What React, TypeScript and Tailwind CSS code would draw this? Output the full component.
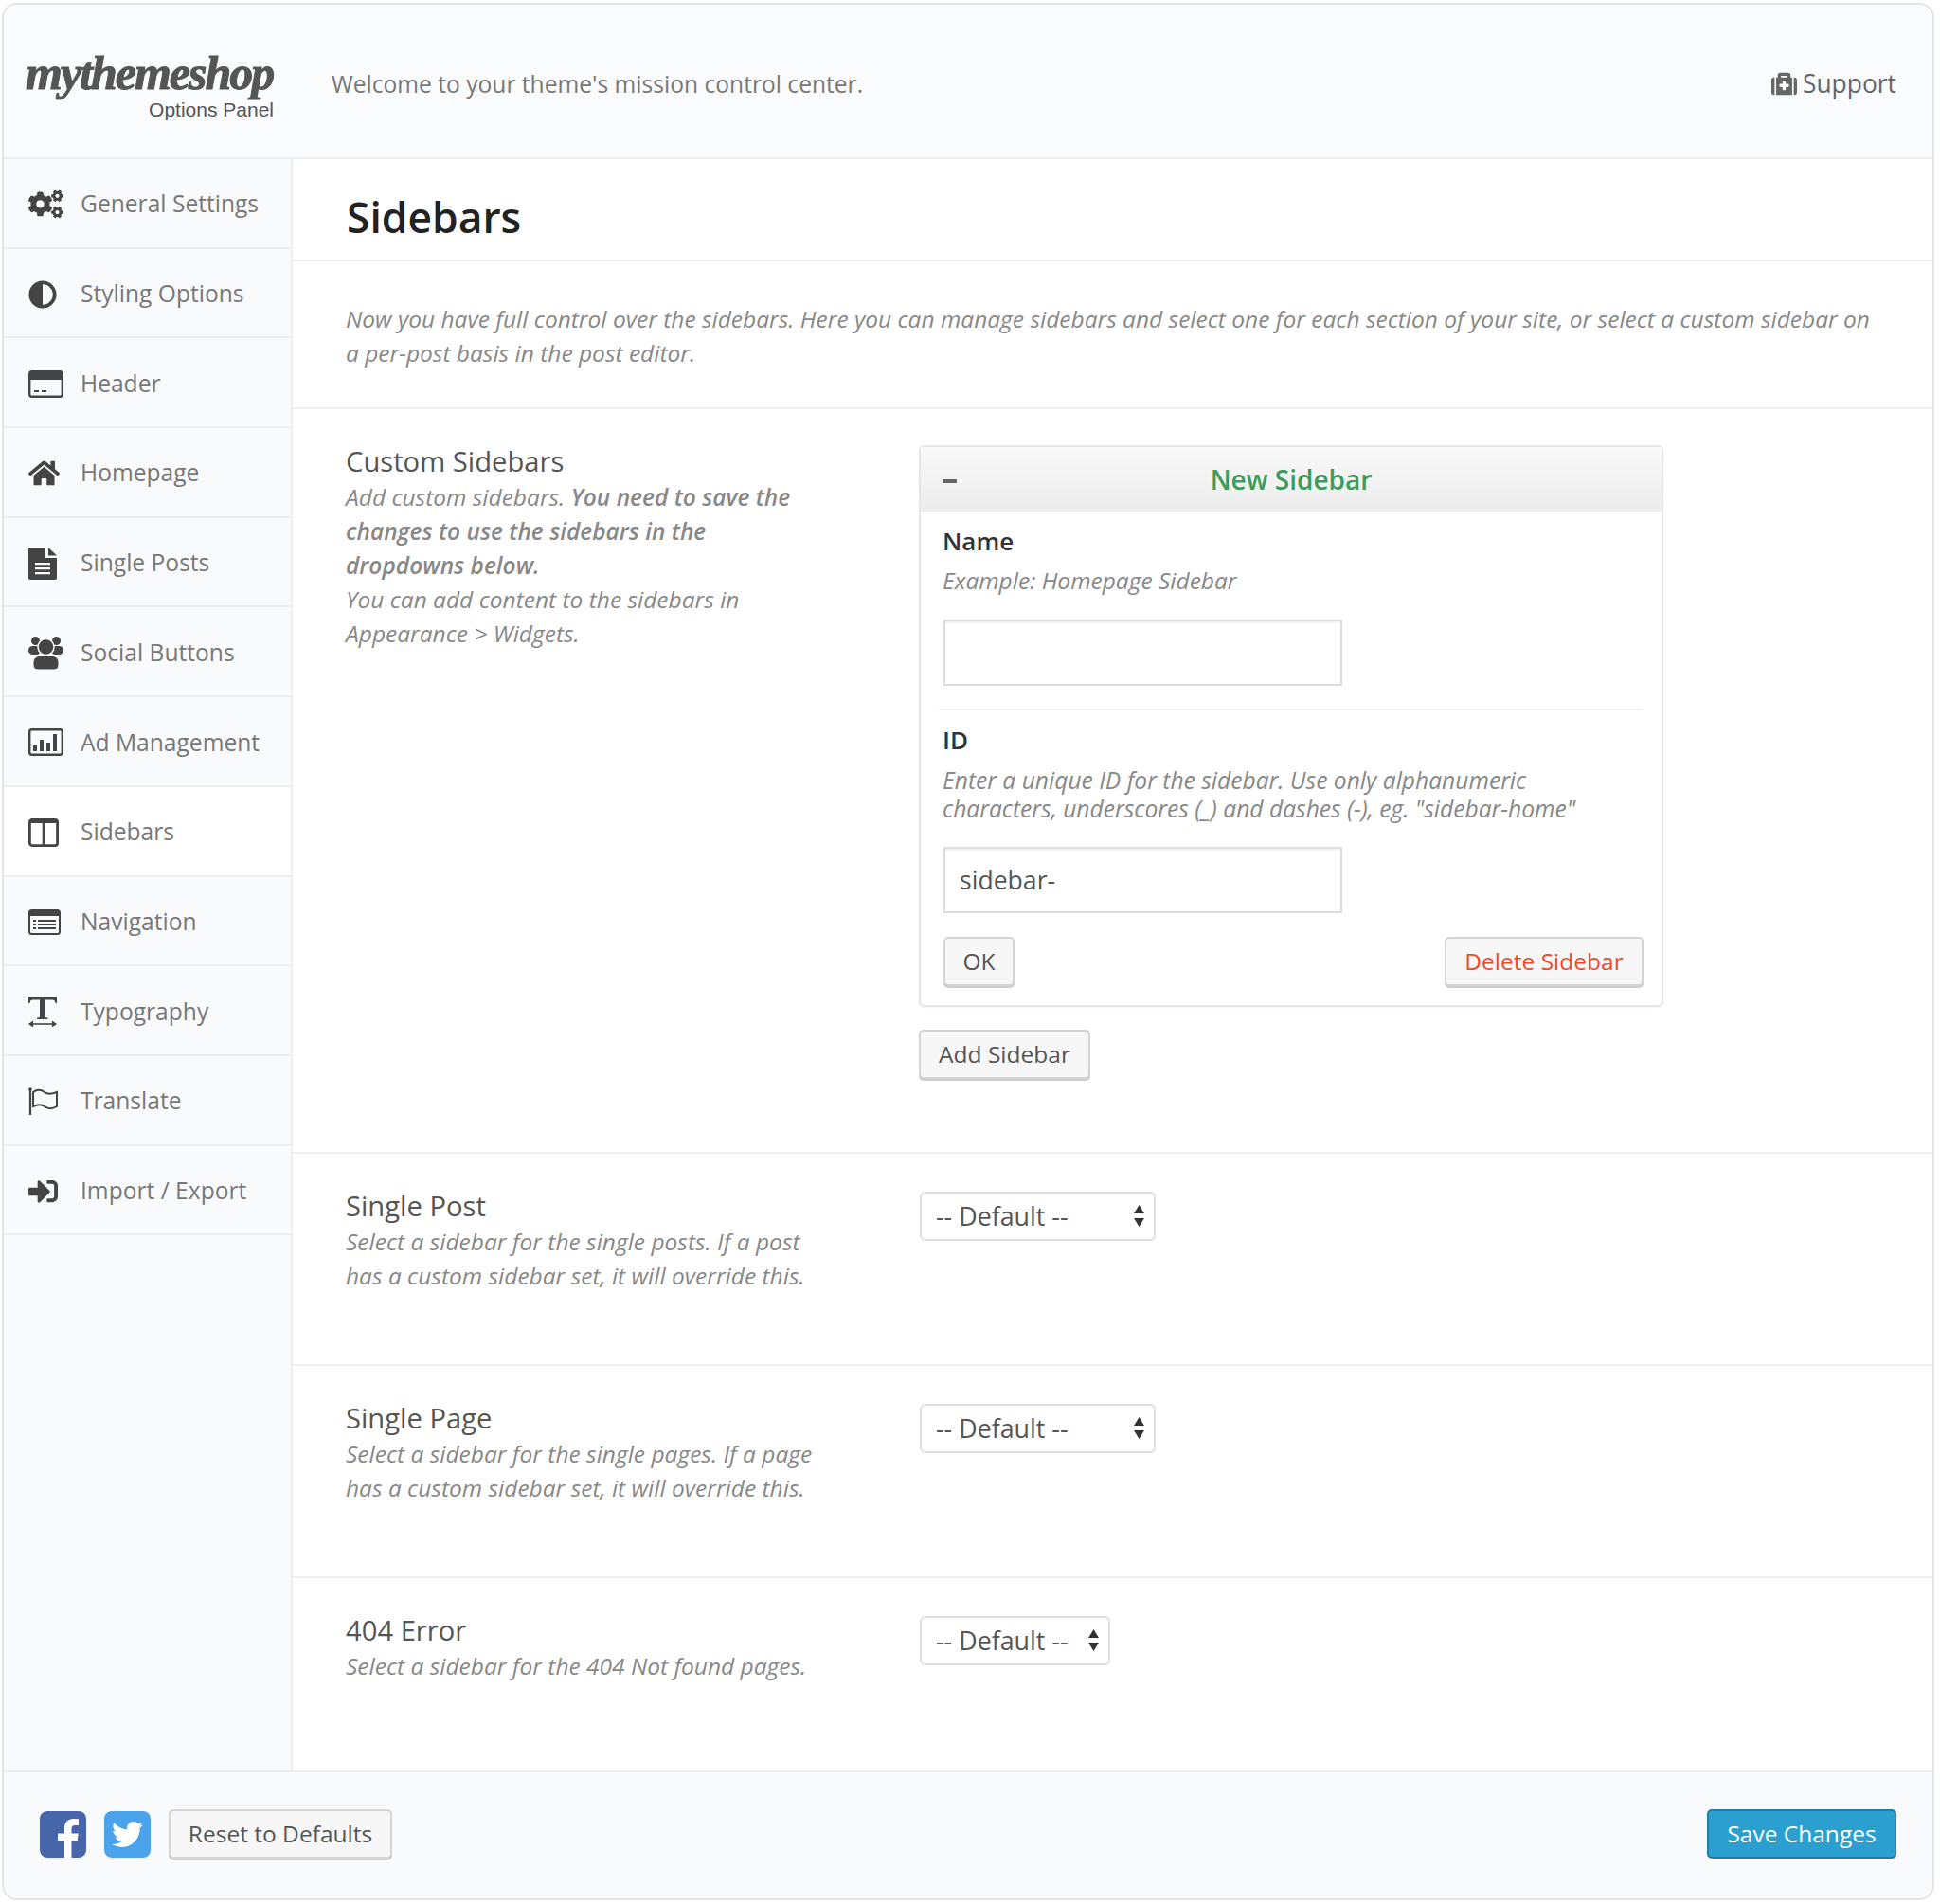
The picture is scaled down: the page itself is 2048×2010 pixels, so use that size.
import type { ReactNode } from "react";
import { FaAdjust, FaCogs, FaHome, FaMedkit, FaSignInAlt, FaTwitter } from "react-icons/fa";

function HeaderIcon() {
  return (
    <svg width="37" height="29" viewBox="0 0 37 29" fill="none">
      <rect x="1.2" y="1.2" width="34.6" height="26.6" rx="2.5" stroke="#444" strokeWidth="2.4" />
      <rect x="1" y="1" width="35" height="9" fill="#444" />
      <rect x="6" y="21" width="5" height="2" fill="#444" />
      <rect x="14" y="21" width="5" height="2" fill="#444" />
    </svg>
  );
}

function FileIcon() {
  return (
    <svg width="30" height="34" viewBox="0 0 30 34">
      <path d="M1 0H18V11H30V32a2 2 0 0 1-2 2H2a2 2 0 0 1-2-2V1z" fill="#444" />
      <path d="M21 0 30 8.500H21z" fill="#444" />
      <path d="M7 16h16v2.200H7zM7 21h16v2.200H7zM7 26h16v2.200H7z" fill="#f9fafc" />
    </svg>
  );
}

function UsersIcon() {
  return (
    <svg width="37" height="35" viewBox="0 0 37 35">
      <circle cx="7.500" cy="4.500" r="4.500" fill="#444" />
      <circle cx="29.500" cy="4.500" r="4.500" fill="#444" />
      <rect x="0" y="10" width="13" height="9" rx="4.500" fill="#444" />
      <rect x="24" y="10" width="13" height="9" rx="4.500" fill="#444" />
      <circle cx="18.500" cy="11" r="8.500" fill="#444" stroke="#f9fafc" strokeWidth="1.500" />
      <path d="M5 28c0-5 3-7.500 7-7.500h13c4 0 7 2.500 7 7.500v2c0 3-2 5-5 5H10c-3 0-5-2-5-5z" fill="#444" stroke="#f9fafc" strokeWidth="1" />
    </svg>
  );
}

function AdIcon() {
  return (
    <svg width="37" height="29" viewBox="0 0 37 29" fill="none">
      <rect x="1.2" y="1.2" width="34.6" height="26.6" rx="2.5" stroke="#444" strokeWidth="2.4" />
      <rect x="5" y="18" width="4" height="6" fill="#444" />
      <rect x="12" y="12" width="4" height="12" fill="#444" />
      <rect x="19" y="15" width="4" height="9" fill="#444" />
      <rect x="26" y="6" width="4" height="18" fill="#444" />
    </svg>
  );
}

function ColumnsIcon() {
  return (
    <svg width="32" height="30" viewBox="0 0 32 30" fill="none">
      <rect x="1.4" y="1.4" width="29.2" height="27.2" rx="2.5" stroke="#444" strokeWidth="2.8" />
      <rect x="1" y="1" width="30" height="4" fill="#444" />
      <rect x="14.7" y="2" width="2.6" height="26" fill="#444" />
    </svg>
  );
}

function NavIcon() {
  return (
    <svg width="34" height="27" viewBox="0 0 34 27" fill="none">
      <rect x="1" y="1" width="32" height="25" rx="2.5" stroke="#444" strokeWidth="2" />
      <rect x="1" y="1" width="32" height="6" fill="#444" />
      <path d="M5 11h3v2H5zM10 11h19v2H10zM5 15h3v2H5zM10 15h19v2H10zM5 19h3v2H5zM10 19h19v2H10z" fill="#444" />
    </svg>
  );
}

function TypeIcon() {
  return (
    <svg width="30" height="32" viewBox="0 0 30 32" fill="none">
      <path d="M0 0h30v7h-1.500c-.3-2.500-1-3.500-3.500-3.500h-7.500v17c0 1.500.5 2 3 2V24H9v-1.500c2.500 0 3-.5 3-2v-17H5c-2.500 0-3.200 1-3.500 3.500H0z" fill="#444" />
      <path d="M1 29h28" stroke="#444" strokeWidth="1.600" />
      <path d="M5 25.500 0 29l5 3.500zM25 25.500 30 29l-5 3.500z" fill="#444" />
    </svg>
  );
}

function FlagIcon() {
  return (
    <svg width="32" height="29" viewBox="0 0 32 29" fill="none">
      <circle cx="2" cy="2" r="1.800" fill="#444" />
      <path d="M2 2v27" stroke="#444" strokeWidth="2.200" />
      <path d="M5 5c4-3 8-3 12 0s8 2 13 0v15c-5 3-9 3-13 0s-8-2-12 0z" stroke="#444" strokeWidth="2" />
    </svg>
  );
}

function FacebookIcon() {
  return (
    <svg width="49" height="49" viewBox="0 0 49 49">
      <rect width="49" height="49" rx="8" fill="#4766a9" />
      <path d="M26 49V31h-7v-7.500h7V18c0-6.500 4-10 9.500-10 2.500 0 4.500.2 5.500.3v6.700h-3.700c-3 0-3.800 1.500-3.800 3.700v4.800h7.200l-1 7.500h-6.200v18z" fill="#fff" />
    </svg>
  );
}

function SelectArrows() {
  return (
    <svg className="pointer-events-none absolute right-[12px] top-[14px]" width="11" height="23" viewBox="0 0 11 23">
      <path d="M5.500 0 11 9H0zM5.500 23 0 14h11z" fill="#333" />
    </svg>
  );
}

type NavItem = { label: string; icon: ReactNode; active?: boolean };

const NAV_ITEMS: NavItem[] = [
  { label: "General Settings", icon: <FaCogs size={37} color="#444" /> },
  { label: "Styling Options", icon: <FaAdjust size={30} color="#444" /> },
  { label: "Header", icon: <HeaderIcon /> },
  { label: "Homepage", icon: <FaHome size={33} color="#444" /> },
  { label: "Single Posts", icon: <FileIcon /> },
  { label: "Social Buttons", icon: <UsersIcon /> },
  { label: "Ad Management", icon: <AdIcon /> },
  { label: "Sidebars", icon: <ColumnsIcon />, active: true },
  { label: "Navigation", icon: <NavIcon /> },
  { label: "Typography", icon: <TypeIcon /> },
  { label: "Translate", icon: <FlagIcon /> },
  { label: "Import / Export", icon: <FaSignInAlt size={31} color="#444" /> },
];

const BUTTON =
  "flex h-[52px] items-center justify-center rounded-[5px] border-2 border-[#d4d4d4] bg-[#f7f7f7] text-[24.5px] text-[#555] shadow-[0_2px_0_#ccc]";

function SectionText({ title, children }: { title: string; children: ReactNode }) {
  return (
    <div className="-mt-[4px] w-[510px]">
      <h3 className="text-[29.2px] leading-[39px] text-[#555]">{title}</h3>
      <div className="text-[24.5px] italic leading-[36px] text-[#888]">{children}</div>
    </div>
  );
}

function SelectBox({ width }: { width: string }) {
  return (
    <div className={`relative h-[52px] ${width}`}>
      <select
        defaultValue="default"
        className="h-full w-full appearance-none rounded-[6px] border-2 border-[#dedede] bg-white pl-[15px] text-[26.8px] text-[#555]"
      >
        <option value="default">-- Default --</option>
      </select>
      <SelectArrows />
    </div>
  );
}

function SelectSection({ title, text, width }: { title: string; text: ReactNode; width: string }) {
  return (
    <section className="flex h-[224px] border-b-2 border-[#efefef] pl-[56px] pt-[40px]">
      <div className="w-[606px]">
        <SectionText title={title}>{text}</SectionText>
      </div>
      <SelectBox width={width} />
    </section>
  );
}

export default function App() {
  return (
    <div className="h-[2010px] w-[2048px] bg-white pl-[2px] pt-[3px] font-['Open_Sans',sans-serif]">
      <div className="flex h-[2003px] w-[2040px] flex-col overflow-hidden rounded-[16px] border-2 border-[#e4e4e4] bg-white">
        <header className="flex h-[163px] shrink-0 items-center border-b-2 border-[#eeeeee] bg-[#f9fbfd] pl-[23px] pr-[38px]">
          <div className="flex w-[323px] flex-col pt-[4px]">
            <div className="h-[56px] w-[264px] font-['Liberation_Serif',serif] text-[50px] font-bold italic leading-[56px] tracking-[-2px] text-[#555] [-webkit-text-stroke:1px_#555]">
              mythemeshop
            </div>
            <div className="w-[262px] text-right font-['Liberation_Sans',sans-serif] text-[21px] leading-[22px] text-[#555]">
              Options Panel
            </div>
          </div>
          <p className="flex-1 pt-[8px] text-[24.6px] text-[#777]">Welcome to your theme's mission control center.</p>
          <div className="flex items-center gap-[6px] pt-[6px] text-[26.4px] text-[#666]">
            <FaMedkit size={27} color="#666" />
            Support
          </div>
        </header>

        <div className="flex min-h-0 flex-1">
          <nav className="w-[305px] shrink-0 border-r-2 border-[#eeeeee] bg-[#f9fafc]">
            {NAV_ITEMS.map((item) => (
              <div
                key={item.label}
                className={`flex h-[94.7px] items-center border-b-2 border-[#eeeeee] pl-[26px] pt-[3px] text-[24.6px] text-[#777] ${item.active ? "bg-white" : ""}`}
              >
                <span className="flex w-[55px] shrink-0 items-center">{item.icon}</span>
                {item.label}
              </div>
            ))}
          </nav>

          <main className="min-w-0 flex-1">
            <div className="flex h-[108px] items-center border-b-2 border-[#efefef] pl-[57px] pt-[17px]">
              <h1 className="text-[44.4px] font-semibold text-[#222]">Sidebars</h1>
            </div>
            <div className="h-[156px] border-b-2 border-[#efefef] pl-[56px] pr-[58px] pt-[43px] text-[24.5px] italic leading-[36px] text-[#888]">
              Now you have full control over the sidebars. Here you can manage sidebars and select one for each section of your site, or select a custom sidebar on a per-post basis in the post editor.
            </div>

            <section className="flex h-[786px] border-b-2 border-[#efefef] pl-[56px] pt-[38px]">
              <div className="w-[605px] pt-[2px]">
                <SectionText title="Custom Sidebars">
                  Add custom sidebars. <b className="font-semibold">You need to save the changes to use the sidebars in the dropdowns below.</b>
                  <br />
                  You can add content to the sidebars in Appearance &gt; Widgets.
                </SectionText>
              </div>
              <div>
                <div className="h-[593px] w-[786px] rounded-[6px] border-2 border-[#e6e6e6] shadow-[0_1px_2px_rgba(0,0,0,0.05)]">
                  <div className="relative flex h-[68px] items-center justify-center bg-gradient-to-b from-[#f9f9f9] to-[#ececec] text-[28px] font-semibold text-[#3d9c5c]">
                    <span className="absolute left-[23px] top-[34px] h-[4px] w-[15px] bg-[#666]" />
                    New Sidebar
                  </div>
                  <div className="px-[23px] pt-[13px]">
                    <div className="text-[26px] font-semibold leading-[36px] text-[#333]">Name</div>
                    <div className="mt-[6px] text-[24.5px] italic leading-[36px] text-[#888]">Example: Homepage Sidebar</div>
                    <input className="ml-[1px] mt-[23px] block h-[70px] w-[421px] border-2 border-[#dddddd] bg-white shadow-[inset_0_2px_2px_rgba(0,0,0,0.05)]" />
                    <div className="-mx-[4px] mt-[24px] h-[2px] bg-[#f1f1f1]" />
                    <div className="mt-[13px] text-[26px] font-semibold leading-[36px] text-[#333]">ID</div>
                    <div className="mt-[10px] text-[24.6px] italic leading-[30px] text-[#888]">
                      Enter a unique ID for the sidebar. Use only alphanumeric
                      <br />
                      characters, underscores (_) and dashes (-), eg. "sidebar-home"
                    </div>
                    <input
                      defaultValue="sidebar-"
                      className="ml-[1px] mt-[25px] block h-[70px] w-[421px] border-2 border-[#dddddd] bg-white pl-[15px] text-[26.6px] text-[#555] shadow-[inset_0_2px_2px_rgba(0,0,0,0.05)]"
                    />
                    <div className="-mr-[4px] ml-[1px] mt-[25px] flex justify-between">
                      <button className={`${BUTTON} w-[75px]`}>OK</button>
                      <button className={`${BUTTON} w-[210px] !text-[#e84c2b]`}>Delete Sidebar</button>
                    </div>
                  </div>
                </div>
                <button className={`${BUTTON} mt-[24px] w-[181px]`}>Add Sidebar</button>
              </div>
            </section>

            <SelectSection
              title="Single Post"
              width="w-[249px]"
              text={<>Select a sidebar for the single posts. If a post has a custom sidebar set, it will override this.</>}
            />
            <SelectSection
              title="Single Page"
              width="w-[249px]"
              text={<>Select a sidebar for the single pages. If a page has a custom sidebar set, it will override this.</>}
            />
            <section className="flex pl-[56px] pt-[40px]">
              <div className="w-[606px]">
                <SectionText title="404 Error">Select a sidebar for the 404 Not found pages.</SectionText>
              </div>
              <SelectBox width="w-[201px]" />
            </section>
          </main>
        </div>

        <footer className="flex h-[135px] shrink-0 items-center border-t-2 border-[#eeeeee] bg-[#f9fafc] pb-[3px] pl-[38px] pr-[38px]">
          <FacebookIcon />
          <span className="ml-[19px] flex h-[49px] w-[49px] items-center justify-center rounded-[8px] bg-[#4ba3ec]">
            <FaTwitter size={33} color="#fff" />
          </span>
          <button className={`${BUTTON} ml-[19px] w-[236px]`}>Reset to Defaults</button>
          <button className="ml-auto flex h-[52px] w-[200px] items-center justify-center rounded-[5px] border-2 border-[#1f7fa8] bg-[#2a9fd0] text-[24.5px] font-medium text-white">
            Save Changes
          </button>
        </footer>
      </div>
    </div>
  );
}
